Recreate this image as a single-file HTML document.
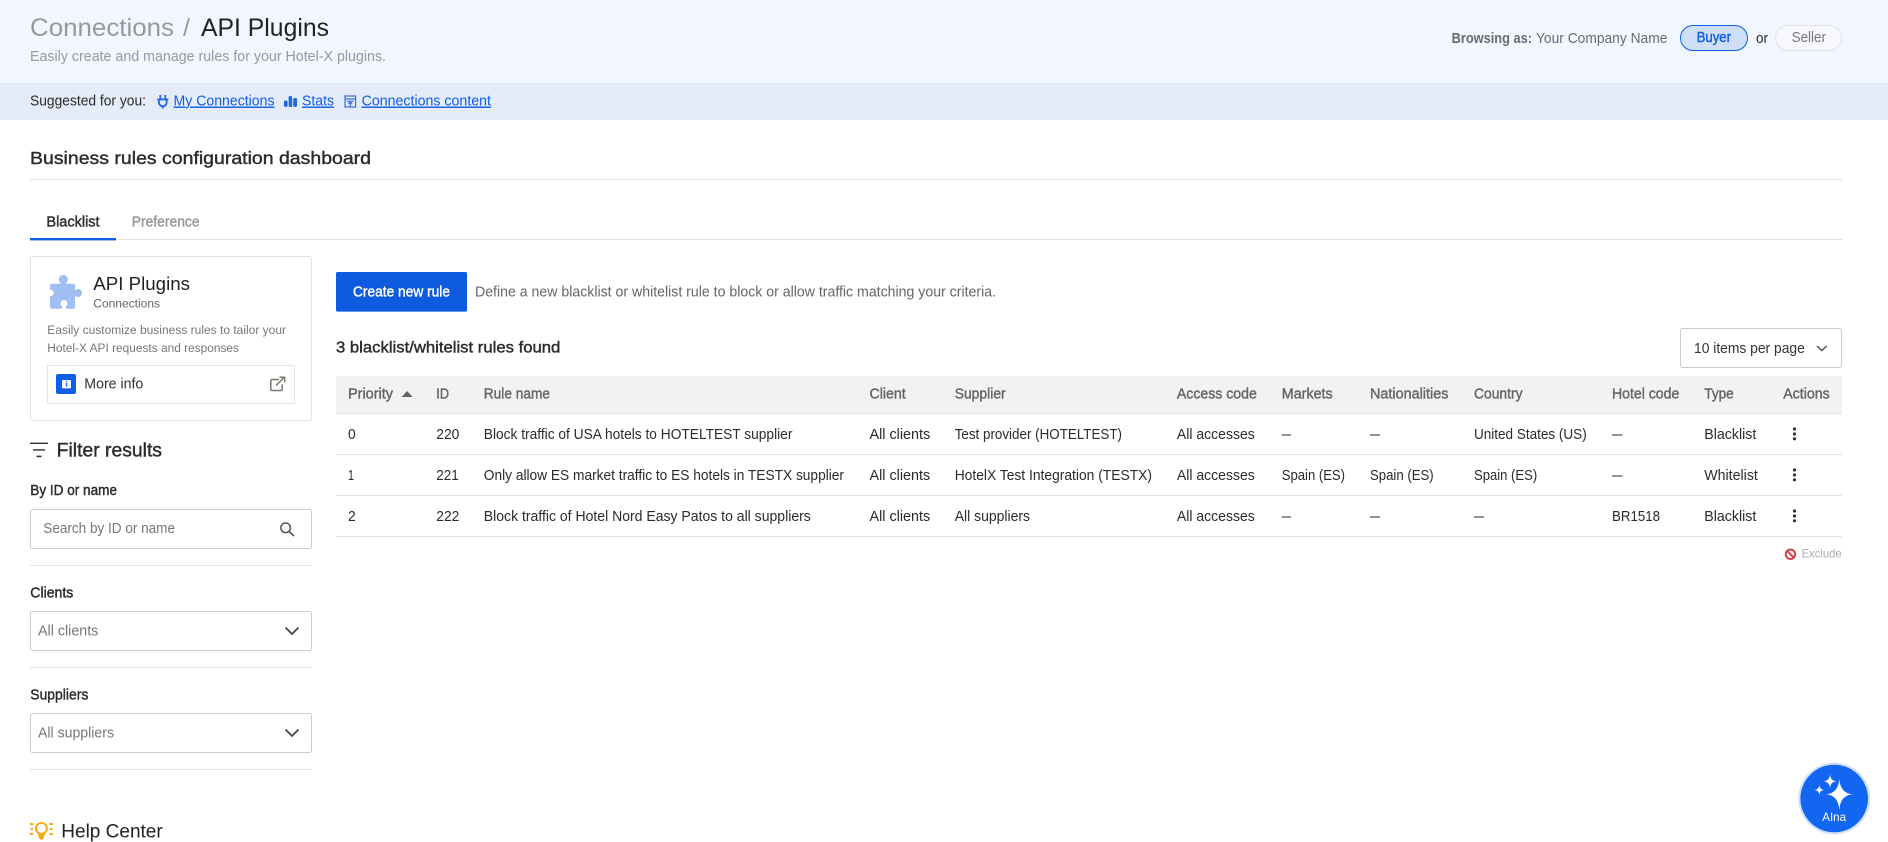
<!DOCTYPE html>
<html lang="en">
<head>
<meta charset="utf-8">
<title>API Plugins</title>
<style>
html,body{margin:0;padding:0;background:#fff;width:1888px;height:842px;overflow:hidden}
svg{display:block}
text{font-family:"Liberation Sans",Arial,sans-serif;font-size:14.4px;fill:#2b2b2b;white-space:pre}
.m{stroke:currentColor;stroke-width:.4px}
.d{color:#2b2b2b}
.h{fill:#666;color:#666}
.l{fill:#0f5fe6;text-decoration:underline}
</style>
</head>
<body>
<svg xmlns="http://www.w3.org/2000/svg" width="1888" height="842" viewBox="0 0 1888 842">
<rect width="1888" height="83" fill="#f2f6ff"/>
<rect y="83" width="1888" height="37" fill="#e5ecf9"/>

<text x="30" y="36" textLength="144" lengthAdjust="spacingAndGlyphs" style="font-size:25px;fill:#999">Connections</text>
<text x="183" y="36" textLength="7" lengthAdjust="spacingAndGlyphs" style="font-size:25px;fill:#999">/</text>
<text x="201" y="36" textLength="128" lengthAdjust="spacingAndGlyphs" style="font-size:25px;fill:#222">API Plugins</text>
<text x="30" y="61" textLength="356" lengthAdjust="spacingAndGlyphs" style="fill:#999">Easily create and manage rules for your Hotel-X plugins.</text>

<text x="1451.6" y="43" textLength="80.4" lengthAdjust="spacingAndGlyphs" style="fill:#6b6b6b;font-weight:bold">Browsing as:</text>
<text x="1536" y="43" textLength="131.4" lengthAdjust="spacingAndGlyphs" style="fill:#6b6b6b">Your Company Name</text>
<rect x="1680.5" y="25.5" width="67" height="25" rx="12.5" fill="#cfdff8" stroke="#0f5fe6"/>
<text x="1696.6" y="42" textLength="34.4" lengthAdjust="spacingAndGlyphs" class="m" style="fill:#0f5fe6;color:#0f5fe6">Buyer</text>
<text x="1756" y="43" textLength="12" lengthAdjust="spacingAndGlyphs" style="fill:#2b2b2b">or</text>
<rect x="1775.5" y="25.5" width="66" height="25" rx="12.5" fill="#f6f8fd" stroke="#e4e4e8"/>
<text x="1791.6" y="42" textLength="34.4" lengthAdjust="spacingAndGlyphs" style="fill:#777">Seller</text>

<text x="30" y="105.5" textLength="116" lengthAdjust="spacingAndGlyphs">Suggested for you:</text>
<g fill="none" stroke="#2166e6" stroke-width="1.8">
<path d="M160.3 95v4.5M165.3 95v4.5M157.3 99.5h11M159 99.5v3a3.8 3.8 0 0 0 7.6 0v-3M162.8 106v2.5"/>
</g>
<g fill="#2166e6">
<rect x="284" y="100.5" width="3.6" height="6.5" rx="1.6"/>
<rect x="288.6" y="96" width="3.6" height="11" rx="1.6"/>
<rect x="293.2" y="98" width="3.8" height="9" rx="1.6"/>
</g>
<g fill="none" stroke="#3a6ed8" stroke-width="1.2">
<rect x="345" y="96" width="10.6" height="11"/>
<path d="M345 99h10.6M347 101.3h6.6M350.3 107v-5M348.4 104l1.9-2 1.9 2"/>
</g>
<text x="173.5" y="105.5" textLength="101" lengthAdjust="spacingAndGlyphs" class="l">My Connections</text>
<text x="302" y="105.5" textLength="32" lengthAdjust="spacingAndGlyphs" class="l">Stats</text>
<text x="361.6" y="105.5" textLength="129.4" lengthAdjust="spacingAndGlyphs" class="l">Connections content</text>

<text x="30" y="164" textLength="341" lengthAdjust="spacingAndGlyphs" class="m d" style="font-size:17.3px">Business rules configuration dashboard</text>
<rect x="30" y="179" width="1812" height="1" fill="#e4e4e4"/>

<text x="46.4" y="226.7" textLength="53.2" lengthAdjust="spacingAndGlyphs" class="m d">Blacklist</text>
<text x="131.7" y="226.7" textLength="67.9" lengthAdjust="spacingAndGlyphs" class="m" style="fill:#999;color:#999">Preference</text>
<rect x="30" y="239" width="1812" height="1" fill="#e2e2e2"/>
<rect x="30" y="238" width="86" height="2.4" fill="#0f5fe6"/>

<!-- Card -->
<rect x="30.5" y="256.5" width="281" height="164" rx="2" fill="#fff" stroke="#e4e4e4"/>
<g fill="#a0bff2">
<rect x="50" y="283.7" width="25" height="25" rx="2"/>
<circle cx="63.3" cy="279.5" r="4.5"/>
<rect x="60.5" y="280" width="5.6" height="5"/>
<circle cx="78" cy="293" r="4"/>
<rect x="74" y="290.2" width="4" height="5.6"/>
</g>
<circle cx="50.5" cy="293" r="3.2" fill="#fff"/>
<circle cx="64" cy="303.5" r="3.4" fill="#fff"/>
<rect x="62" y="305" width="4" height="4" fill="#fff"/>
<text x="93.3" y="290" textLength="96.7" lengthAdjust="spacingAndGlyphs" style="font-size:18.5px;fill:#222">API Plugins</text>
<text x="93.3" y="307.7" textLength="66.7" lengthAdjust="spacingAndGlyphs" style="font-size:12.2px;fill:#666">Connections</text>
<text x="47.3" y="334" textLength="238.7" lengthAdjust="spacingAndGlyphs" style="font-size:12.2px;fill:#777">Easily customize business rules to tailor your</text>
<text x="47.3" y="352" textLength="191.7" lengthAdjust="spacingAndGlyphs" style="font-size:12.2px;fill:#777">Hotel-X API requests and responses</text>
<rect x="47.5" y="365.5" width="247" height="38" fill="#fff" stroke="#e4e4e4"/>
<rect x="56" y="374" width="20" height="20" rx="2" fill="#0f5fe6"/>
<rect x="62" y="380" width="9" height="8.4" rx="1" fill="#fff"/>
<rect x="65.9" y="381" width="1.3" height="1.3" fill="#0f5fe6"/>
<rect x="65.9" y="383" width="1.3" height="3.6" fill="#0f5fe6"/>
<text x="84.3" y="388.7" textLength="59" lengthAdjust="spacingAndGlyphs" style="fill:#333">More info</text>
<path d="M279 379.5h-7a1.2 1.2 0 0 0-1.2 1.2v8.6a1.2 1.2 0 0 0 1.2 1.2h9a1.2 1.2 0 0 0 1.2-1.2v-5M276 385.5l8.5-8.3M279.5 377.2h5.2v5.2" fill="none" stroke="#7d7870" stroke-width="1.5"/>

<!-- Filter -->
<g fill="#333">
<rect x="30" y="442.6" width="18" height="1.4"/>
<rect x="33" y="449.2" width="12" height="1.4"/>
<rect x="36.5" y="455.6" width="5" height="1.6"/>
</g>
<text x="56.7" y="456.7" textLength="105.3" lengthAdjust="spacingAndGlyphs" class="m d" style="font-size:19px">Filter results</text>

<text x="30.3" y="495" textLength="86.7" lengthAdjust="spacingAndGlyphs" class="m d">By ID or name</text>
<rect x="30.5" y="509.5" width="281" height="39" rx="2" fill="#fff" stroke="#ccc"/>
<text x="43.3" y="533" textLength="131.7" lengthAdjust="spacingAndGlyphs" style="fill:#777">Search by ID or name</text>
<circle cx="285.6" cy="527.8" r="4.8" fill="none" stroke="#555" stroke-width="1.5"/>
<path d="M289 531.4l5 4.6" stroke="#555" stroke-width="1.6" fill="none"/>
<rect x="30" y="565" width="282" height="1" fill="#e4e4e4"/>

<text x="30.3" y="597.3" textLength="43" lengthAdjust="spacingAndGlyphs" class="m d">Clients</text>
<rect x="30.5" y="611.5" width="281" height="39" rx="2" fill="#fff" stroke="#ccc"/>
<text x="38" y="635.3" textLength="60.3" lengthAdjust="spacingAndGlyphs" style="fill:#777">All clients</text>
<path d="M285.5 627.5l6.5 6.5 6.5-6.5" fill="none" stroke="#444" stroke-width="1.7"/>
<rect x="30" y="667" width="282" height="1" fill="#e4e4e4"/>

<text x="30.3" y="699.3" textLength="58" lengthAdjust="spacingAndGlyphs" class="m d">Suppliers</text>
<rect x="30.5" y="713.5" width="281" height="39" rx="2" fill="#fff" stroke="#ccc"/>
<text x="38" y="737.3" textLength="76" lengthAdjust="spacingAndGlyphs" style="fill:#777">All suppliers</text>
<path d="M285.5 729.5l6.5 6.5 6.5-6.5" fill="none" stroke="#444" stroke-width="1.7"/>
<rect x="30" y="769" width="282" height="1" fill="#e4e4e4"/>

<!-- Help -->
<g fill="none" stroke="#f5a80f" stroke-width="1.9">
<circle cx="41.4" cy="828.4" r="5.5"/>
<path d="M30 824h3.3M30.5 829h2.6M30 834h3.3M49.6 824h3.3M49.9 829h2.6M49.6 834h3.3"/>
</g>
<path d="M37.6 833h7.6l-1.6 5a2.3 2.3 0 0 1-4.4 0z" fill="#f5a80f"/>
<text x="61.3" y="837.7" textLength="101.4" lengthAdjust="spacingAndGlyphs" style="font-size:19px;fill:#222">Help Center</text>

<!-- Main -->
<rect x="336" y="272" width="131" height="39.6" rx="1.5" fill="#0f5be0"/>
<text x="353" y="296.7" textLength="97" lengthAdjust="spacingAndGlyphs" class="m" style="fill:#fff;color:#fff">Create new rule</text>
<text x="475" y="296.7" textLength="521" lengthAdjust="spacingAndGlyphs" style="fill:#666">Define a new blacklist or whitelist rule to block or allow traffic matching your criteria.</text>
<text x="336" y="352.7" textLength="224.3" lengthAdjust="spacingAndGlyphs" class="m d" style="font-size:15.6px">3 blacklist/whitelist rules found</text>

<rect x="1680.5" y="328.5" width="161" height="39" rx="2" fill="#fff" stroke="#ccc"/>
<text x="1694" y="353" textLength="110.8" lengthAdjust="spacingAndGlyphs" style="fill:#333">10 items per page</text>
<path d="M1817 346l4.8 4.6 4.8-4.6" fill="none" stroke="#444" stroke-width="1.3"/>

<rect x="336" y="376" width="1506" height="38" fill="#f2f2f2"/>
<rect x="336" y="413" width="1506" height="1" fill="#e4e4e4"/>
<rect x="336" y="454" width="1506" height="1" fill="#e4e4e4"/>
<rect x="336" y="495" width="1506" height="1" fill="#e4e4e4"/>
<rect x="336" y="536" width="1506" height="1" fill="#e4e4e4"/>

<g>
<text x="348" y="398.7" textLength="45" lengthAdjust="spacingAndGlyphs" class="m h">Priority</text>
<path d="M401.6 397l5.5-6 5.5 6z" fill="#666"/>
<text x="436.3" y="398.7" textLength="12.7" lengthAdjust="spacingAndGlyphs" class="m h">ID</text>
<text x="483.8" y="398.7" textLength="66.2" lengthAdjust="spacingAndGlyphs" class="m h">Rule name</text>
<text x="869.5" y="398.7" textLength="36.2" lengthAdjust="spacingAndGlyphs" class="m h">Client</text>
<text x="954.7" y="398.7" textLength="51" lengthAdjust="spacingAndGlyphs" class="m h">Supplier</text>
<text x="1176.9" y="398.7" textLength="79.9" lengthAdjust="spacingAndGlyphs" class="m h">Access code</text>
<text x="1281.8" y="398.7" textLength="50.9" lengthAdjust="spacingAndGlyphs" class="m h">Markets</text>
<text x="1370" y="398.7" textLength="78.4" lengthAdjust="spacingAndGlyphs" class="m h">Nationalities</text>
<text x="1474" y="398.7" textLength="48.5" lengthAdjust="spacingAndGlyphs" class="m h">Country</text>
<text x="1612" y="398.7" textLength="67.3" lengthAdjust="spacingAndGlyphs" class="m h">Hotel code</text>
<text x="1704.3" y="398.7" textLength="29.4" lengthAdjust="spacingAndGlyphs" class="m h">Type</text>
<text x="1783.2" y="398.7" textLength="46.6" lengthAdjust="spacingAndGlyphs" class="m h">Actions</text>
</g>

<g>
<text x="348" y="439" textLength="7.7" lengthAdjust="spacingAndGlyphs">0</text>
<text x="436.3" y="439" textLength="23" lengthAdjust="spacingAndGlyphs">220</text>
<text x="483.8" y="439" textLength="308.6" lengthAdjust="spacingAndGlyphs">Block traffic of USA hotels to HOTELTEST supplier</text>
<text x="869.5" y="439" textLength="60.7" lengthAdjust="spacingAndGlyphs">All clients</text>
<text x="954.7" y="439" textLength="167.3" lengthAdjust="spacingAndGlyphs">Test provider (HOTELTEST)</text>
<text x="1176.9" y="439" textLength="77.9" lengthAdjust="spacingAndGlyphs">All accesses</text>
<text x="1281.8" y="439" textLength="9.2" lengthAdjust="spacingAndGlyphs">—</text>
<text x="1370" y="439" textLength="10" lengthAdjust="spacingAndGlyphs">—</text>
<text x="1474" y="439" textLength="112.7" lengthAdjust="spacingAndGlyphs">United States (US)</text>
<text x="1612" y="439" textLength="10.5" lengthAdjust="spacingAndGlyphs">—</text>
<text x="1704.3" y="439" textLength="52" lengthAdjust="spacingAndGlyphs">Blacklist</text>
</g>
<g>
<text x="348" y="480" textLength="6" lengthAdjust="spacingAndGlyphs">1</text>
<text x="436.3" y="480" textLength="22.5" lengthAdjust="spacingAndGlyphs">221</text>
<text x="483.8" y="480" textLength="360.2" lengthAdjust="spacingAndGlyphs">Only allow ES market traffic to ES hotels in TESTX supplier</text>
<text x="869.5" y="480" textLength="60.7" lengthAdjust="spacingAndGlyphs">All clients</text>
<text x="954.7" y="480" textLength="197.3" lengthAdjust="spacingAndGlyphs">HotelX Test Integration (TESTX)</text>
<text x="1176.9" y="480" textLength="77.9" lengthAdjust="spacingAndGlyphs">All accesses</text>
<text x="1281.8" y="480" textLength="63.2" lengthAdjust="spacingAndGlyphs">Spain (ES)</text>
<text x="1370" y="480" textLength="63.7" lengthAdjust="spacingAndGlyphs">Spain (ES)</text>
<text x="1474" y="480" textLength="63.2" lengthAdjust="spacingAndGlyphs">Spain (ES)</text>
<text x="1612" y="480" textLength="10.5" lengthAdjust="spacingAndGlyphs">—</text>
<text x="1704.3" y="480" textLength="53.5" lengthAdjust="spacingAndGlyphs">Whitelist</text>
</g>
<g>
<text x="348" y="521" textLength="7.7" lengthAdjust="spacingAndGlyphs">2</text>
<text x="436.3" y="521" textLength="23" lengthAdjust="spacingAndGlyphs">222</text>
<text x="483.8" y="521" textLength="327" lengthAdjust="spacingAndGlyphs">Block traffic of Hotel Nord Easy Patos to all suppliers</text>
<text x="869.5" y="521" textLength="60.7" lengthAdjust="spacingAndGlyphs">All clients</text>
<text x="954.7" y="521" textLength="75.3" lengthAdjust="spacingAndGlyphs">All suppliers</text>
<text x="1176.9" y="521" textLength="77.9" lengthAdjust="spacingAndGlyphs">All accesses</text>
<text x="1281.8" y="521" textLength="9.2" lengthAdjust="spacingAndGlyphs">—</text>
<text x="1370" y="521" textLength="10" lengthAdjust="spacingAndGlyphs">—</text>
<text x="1474" y="521" textLength="10" lengthAdjust="spacingAndGlyphs">—</text>
<text x="1612" y="521" textLength="48" lengthAdjust="spacingAndGlyphs">BR1518</text>
<text x="1704.3" y="521" textLength="52" lengthAdjust="spacingAndGlyphs">Blacklist</text>
</g>

<g fill="#333">
<circle cx="1794.5" cy="429" r="1.6"/><circle cx="1794.5" cy="434" r="1.6"/><circle cx="1794.5" cy="438.8" r="1.6"/>
<circle cx="1794.5" cy="470" r="1.6"/><circle cx="1794.5" cy="475" r="1.6"/><circle cx="1794.5" cy="479.8" r="1.6"/>
<circle cx="1794.5" cy="511" r="1.6"/><circle cx="1794.5" cy="516" r="1.6"/><circle cx="1794.5" cy="520.8" r="1.6"/>
</g>

<circle cx="1790.5" cy="554.3" r="4.7" fill="none" stroke="#d9363e" stroke-width="1.9"/>
<path d="M1787.2 551l6.6 6.6" stroke="#d9363e" stroke-width="1.9"/>
<text x="1801.6" y="557.7" textLength="40" lengthAdjust="spacingAndGlyphs" style="font-size:12px;fill:#aaa">Exclude</text>

<!-- AIna -->
<circle cx="1834.2" cy="798.5" r="36" fill="#d3e1f8"/>
<circle cx="1834.2" cy="798.5" r="33.8" fill="#1366f2"/>
<g fill="#fff">
<path d="M1839.3 779q.9 14 13 15.3-12.1 1.3-13 15.7-.9-14.4-13-15.7 12.1-1.3 13-15.3z"/>
<path d="M1830 774.2q.4 6.7 6.8 7.1-6.4.4-6.8 7.1-.4-6.7-6.8-7.1 6.4-.4 6.8-7.1z"/>
<path d="M1819.3 785q.3 4.7 5 5-4.7.3-5 5-.3-4.7-5-5 4.7-.3 5-5z"/>
</g>
<text x="1822.3" y="821" textLength="23.7" lengthAdjust="spacingAndGlyphs" style="font-size:12px;fill:#fff">AIna</text>
</svg>
</body>
</html>
